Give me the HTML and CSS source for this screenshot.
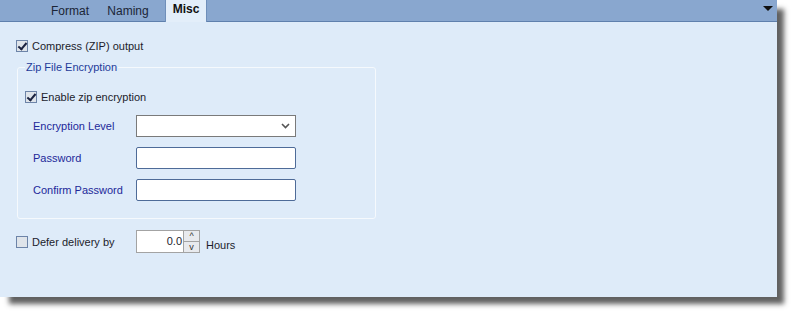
FILE: index.html
```html
<!DOCTYPE html>
<html lang="en">

<head>
  <meta charset="UTF-8">
  <title>Misc | Output Options</title>
  <link rel="stylesheet" href="styles.css">
</head>

<body>
  <div class="window">
    <div class="tabs">
      <span class="tab tab-format">Format</span>
      <span class="tab tab-naming">Naming</span>
      <span class="tab active">Misc</span>
      <span class="tab-menu"></span>
    </div>

    <div class="content">
      <label class="check top">
        <span class="box checked"></span>Compress (ZIP) output
      </label>

      <fieldset class="group">
        <legend>Zip File Encryption</legend>
        <label class="check">
          <span class="box checked"></span>Enable zip encryption
        </label>

        <div class="row first">
          <span class="lbl">Encryption Level</span>
          <div class="field select">
            <svg width="9" height="6" viewBox="0 0 9 6"><path d="M1 1 L4.5 4.5 L8 1" fill="none" stroke="#555" stroke-width="1.6"/></svg>
          </div>
        </div>
        <div class="row">
          <span class="lbl">Password</span>
          <div class="field"></div>
        </div>
        <div class="row">
          <span class="lbl">Confirm Password</span>
          <div class="field"></div>
        </div>
      </fieldset>

      <div class="row defer">
        <label class="check">
          <span class="box"></span>Defer delivery by
        </label>
        <div class="spin">
          <span class="spin-val">0.0</span>
          <span class="spin-btns">
            <span class="spin-btn">^</span>
            <span class="spin-btn down">v</span>
          </span>
        </div>
        <span class="unit">Hours</span>
      </div>
    </div>
  </div>
</body>

</html>
```

FILE: styles.css
```css
* {
  box-sizing: border-box;
}

html {
  background: #fff;
}

body {
  margin: 0;
  padding-bottom: 14px;
  font-family: "Liberation Sans", sans-serif;
  font-size: 11px;
  color: #1c1c2c;
}

.window {
  width: 777px;
  height: 297px;
  background: #deebf9;
  box-shadow: 8px 8px 5px -1px rgba(30, 30, 30, 0.7);
}

.tabs {
  position: relative;
  display: flex;
  height: 22px;
  background: #89a7cf;
  border-bottom: 1px solid #5f80ad;
  padding-left: 41px;
}

.tab {
  width: 58px;
  line-height: 22px;
  text-align: center;
  color: #1b2536;
  font-size: 12px;
}

.tab.active {
  width: 42px;
  margin-left: 8px;
  height: 22px;
  background: #e3eefa;
  border-left: 1px solid #6f8fba;
  border-right: 1px solid #6f8fba;
  font-weight: bold;
  color: #111;
  line-height: 19px;
}

.tab-menu {
  position: absolute;
  right: 4px;
  top: 6px;
  border-left: 5px solid transparent;
  border-right: 5px solid transparent;
  border-top: 5px solid #111;
}

.content {
  padding: 17px 0 0 16px;
}

.check {
  display: flex;
  align-items: center;
  gap: 4px;
  color: #1c1c2c;
  height: 13px;
}

.box {
  width: 12px;
  height: 12px;
  border: 1px solid #6d84a8;
  background: #dfe4ea;
  position: relative;
}

.box.checked::after {
  content: "";
  position: absolute;
  left: 3px;
  top: 0;
  width: 3px;
  height: 7px;
  border-right: 2px solid #1a2240;
  border-bottom: 2px solid #1a2240;
  transform: rotate(40deg);
}

.group {
  margin: 9px 0 0 1px;
  width: 359px;
  height: 158px;
  border: 1px solid #f5f9fd;
  border-radius: 3px;
  padding: 17px 0 0 7px;
}

.group legend {
  color: #1f3b9a;
  padding: 0 1px;
  margin-left: 0;
}

.row {
  display: flex;
  align-items: center;
  margin-top: 10px;
}

.row.first {
  margin-top: 12px;
}

.lbl {
  width: 111px;
  padding-left: 8px;
  color: #22289a;
}

.field {
  width: 160px;
  height: 22px;
  background: #fff;
  border: 1px solid #4e6b98;
  border-radius: 2px;
}

.select {
  border-color: #7a7a7a;
  border-radius: 0;
  display: flex;
  align-items: center;
  justify-content: flex-end;
  padding-right: 5px;
}

.defer {
  margin-top: 11px;
}

.defer .check {
  width: 120px;
}

.spin {
  display: flex;
  width: 64px;
  height: 23px;
  border: 1px solid #a3a3a3;
  background: #fff;
}

.spin-val {
  flex: 1;
  text-align: right;
  line-height: 20px;
  padding-right: 1px;
}

.spin-btns {
  display: flex;
  flex-direction: column;
  width: 16px;
  border-left: 1px solid #a3a3a3;
}

.spin-btn {
  flex: 1;
  background: #e8eaee;
  font-size: 9px;
  line-height: 10px;
  text-align: center;
  color: #333;
}

.spin-btn.down {
  border-top: 1px solid #a3a3a3;
}

.unit {
  margin-left: 6px;
  margin-top: 7px;
  color: #1c1c2c;
}
```
